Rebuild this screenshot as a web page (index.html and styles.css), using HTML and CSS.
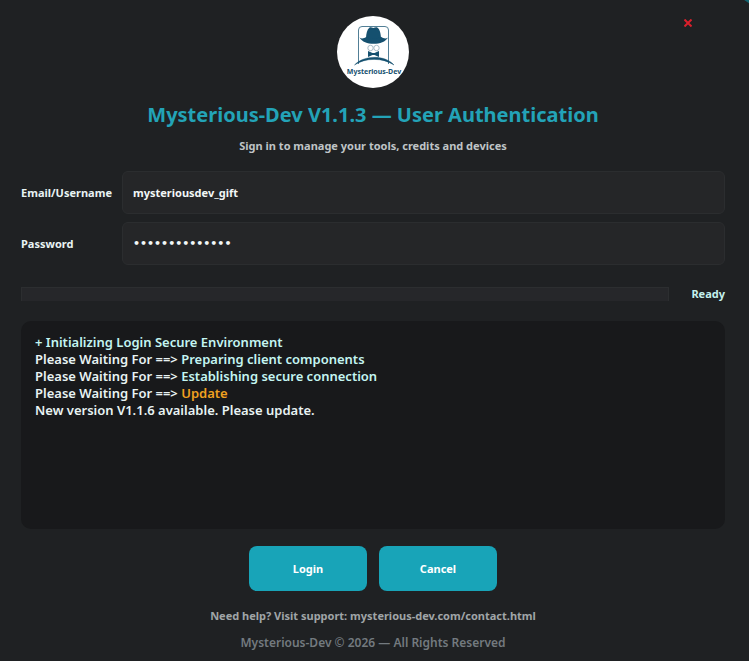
FILE: index.html
```html
<!DOCTYPE html>
<html lang="en">
<head>
<meta charset="utf-8">
<title>Mysterious-Dev — User Authentication</title>
<link rel="stylesheet" href="styles.css">
</head>
<body>
<main class="dialog">
  <button class="close" type="button" aria-label="Close">
    <svg viewBox="0 0 8 8" width="8" height="8" aria-hidden="true"><path d="M0.5 0.5L7.5 7.5M7.5 0.5L0.5 7.5"/></svg>
  </button>
  <header class="header">
    <svg class="logo" viewBox="0 0 72 72" role="img" aria-label="Mysterious-Dev logo">
      <circle cx="36" cy="36" r="36" fill="#fff"/>
      <path d="M21.500 48V14a3.500 3.500 0 0 1 3.500-3.500h23a3.500 3.500 0 0 1 3.500 3.500V48" fill="none" stroke="#527f96" stroke-width="1"/>
      <path d="M29 22c.3-4.500 1-8.500 3.300-10.300 1.300-1 2.600-.2 4 .3 1.500-.5 3-1.300 4.300-.3 2.400 1.800 3.200 6 3.400 10.300-3.800 2-11.200 2-15 0z" fill="#15506f"/>
      <path d="M22.500 21.500c2.300 1.700 4.600.8 7-.8 4 3 10.600 3 14.500 0 2.400 1.600 4.700 2.500 7 .8-2.500 4.300-8 6.300-14.300 6.300S25 25.800 22.500 21.500z" fill="#15506f"/>
      <g fill="none" stroke="#a9bcc7" stroke-width="1"><circle cx="33.500" cy="32" r="2.700"/><circle cx="39.500" cy="32" r="2.700"/></g>
      <path d="M31 35l4.500 2h2l4.500-2v6l-4.500-2h-2l-4.500 2z" fill="#15506f"/>
      <path d="M17.500 49C26 39.500 47 38 57 49 46 41.500 28 41.500 17.500 49z" fill="#15506f" stroke="#15506f" stroke-width=".4"/>
      <text x="37" y="58" text-anchor="middle" class="logo-text">Mysterious-Dev</text>
    </svg>
    <h1 class="title">Mysterious-Dev V1.1.3 — User Authentication</h1>
    <p class="subtitle">Sign in to manage your tools, credits and devices</p>
  </header>
  <form class="form">
    <div class="fields">
      <label for="user">Email/Username</label>
      <input id="user" type="text" value="mysteriousdev_gift">
      <label for="pass">Password</label>
      <input id="pass" type="password" value="mysteriousdev1">
    </div>
    <div class="status">
      <progress id="progress" value="0" max="100" aria-label="Progress"></progress>
      <label for="progress">Ready</label>
    </div>
    <div class="log">
      <p class="info">+ Initializing Login Secure Environment</p>
      <p>Please Waiting For ==&gt; <span class="info">Preparing client components</span></p>
      <p>Please Waiting For ==&gt; <span class="info">Establishing secure connection</span></p>
      <p>Please Waiting For ==&gt; <span class="warn">Update</span></p>
      <p>New version V1.1.6 available. Please update.</p>
    </div>
    <div class="actions">
      <button type="button">Login</button>
      <button type="button">Cancel</button>
    </div>
  </form>
  <footer class="footer">
    <p class="help">Need help? Visit support: mysterious-dev.com/contact.html</p>
    <p class="copyright">Mysterious-Dev © 2026 — All Rights Reserved</p>
  </footer>
</main>
</body>
</html>
```
FILE: styles.css
```css
* {
  box-sizing: border-box;
}

body {
  margin: 0;
  min-height: 100vh;
  background: #1f2123;
  color: #e8f3f3;
  font: 700 11px/16px "Noto Sans", sans-serif;
}

h1,
p {
  margin: 0;
}

.dialog {
  position: relative;
  display: flex;
  flex-direction: column;
  min-height: 100vh;
  padding: 16px 24px 10px 21px;
  overflow: hidden;
}

/* accent at the window corner */
.dialog::after {
  content: "";
  position: absolute;
  top: -4px;
  right: -5px;
  width: 12px;
  height: 6px;
  background: #126470;
  transform: rotate(35deg);
}

.close {
  position: absolute;
  top: 15px;
  right: 53px;
  display: grid;
  place-items: center;
  width: 16px;
  height: 16px;
  padding: 0;
  border: 0;
  background: none;
}

.close path {
  stroke: #d9202c;
  stroke-width: 2;
}

.header {
  display: flex;
  flex-direction: column;
  align-items: center;
}

.logo {
  width: 72px;
  height: 72px;
}

.logo-text {
  fill: #15506f;
  font-size: 7px;
}

.title {
  margin-top: 12px;
  color: #23a3b7;
  font-size: 20px;
  line-height: 30px;
}

.subtitle {
  margin-top: 8px;
  color: #bfc4c6;
}

.form {
  display: flex;
  flex: 1;
  flex-direction: column;
  margin-top: 17px;
}

.fields {
  display: grid;
  grid-template-columns: 91px 1fr;
  gap: 8px 10px;
  align-items: center;
}

.fields label {
  white-space: nowrap;
}

.fields input {
  width: 100%;
  height: 43px;
  padding: 0 10px;
  border: 1px solid #2b2d2f;
  border-radius: 6px;
  background: #252628;
  color: #f2f7f7;
  font: inherit;
}

.fields input[type="password"] {
  font-family: "DejaVu Sans", sans-serif;
}

.status {
  display: flex;
  gap: 22px;
  align-items: center;
  margin-top: 21px;
  color: #c4f0ee;
}

.status progress {
  flex: 1;
  height: 14px;
  border: 1px solid #2c2e30;
  border-bottom: 0;
  background: #26272a;
  appearance: none;
}

.status progress::-webkit-progress-bar {
  background: #26272a;
}

.log {
  flex: 1;
  margin-top: 19px;
  padding: 13px 14px;
  border-radius: 10px;
  background: #18191b;
  font-size: 13px;
  font-weight: 600;
  line-height: 17px;
}

.info {
  color: #c4f5f2;
}

.warn {
  color: #f0a020;
}

.actions {
  display: flex;
  gap: 12px;
  justify-content: center;
  margin-top: 17px;
}

.actions button {
  width: 118px;
  height: 45px;
  border: 0;
  border-radius: 8px;
  background: #18a4b8;
  color: #fff;
  font: inherit;
}

.footer {
  margin-top: 17px;
  text-align: center;
}

.help {
  color: #a0a5a7;
}

.copyright {
  margin-top: 11px;
  color: #737a7f;
  font-size: 12px;
  font-weight: 600;
}
```
